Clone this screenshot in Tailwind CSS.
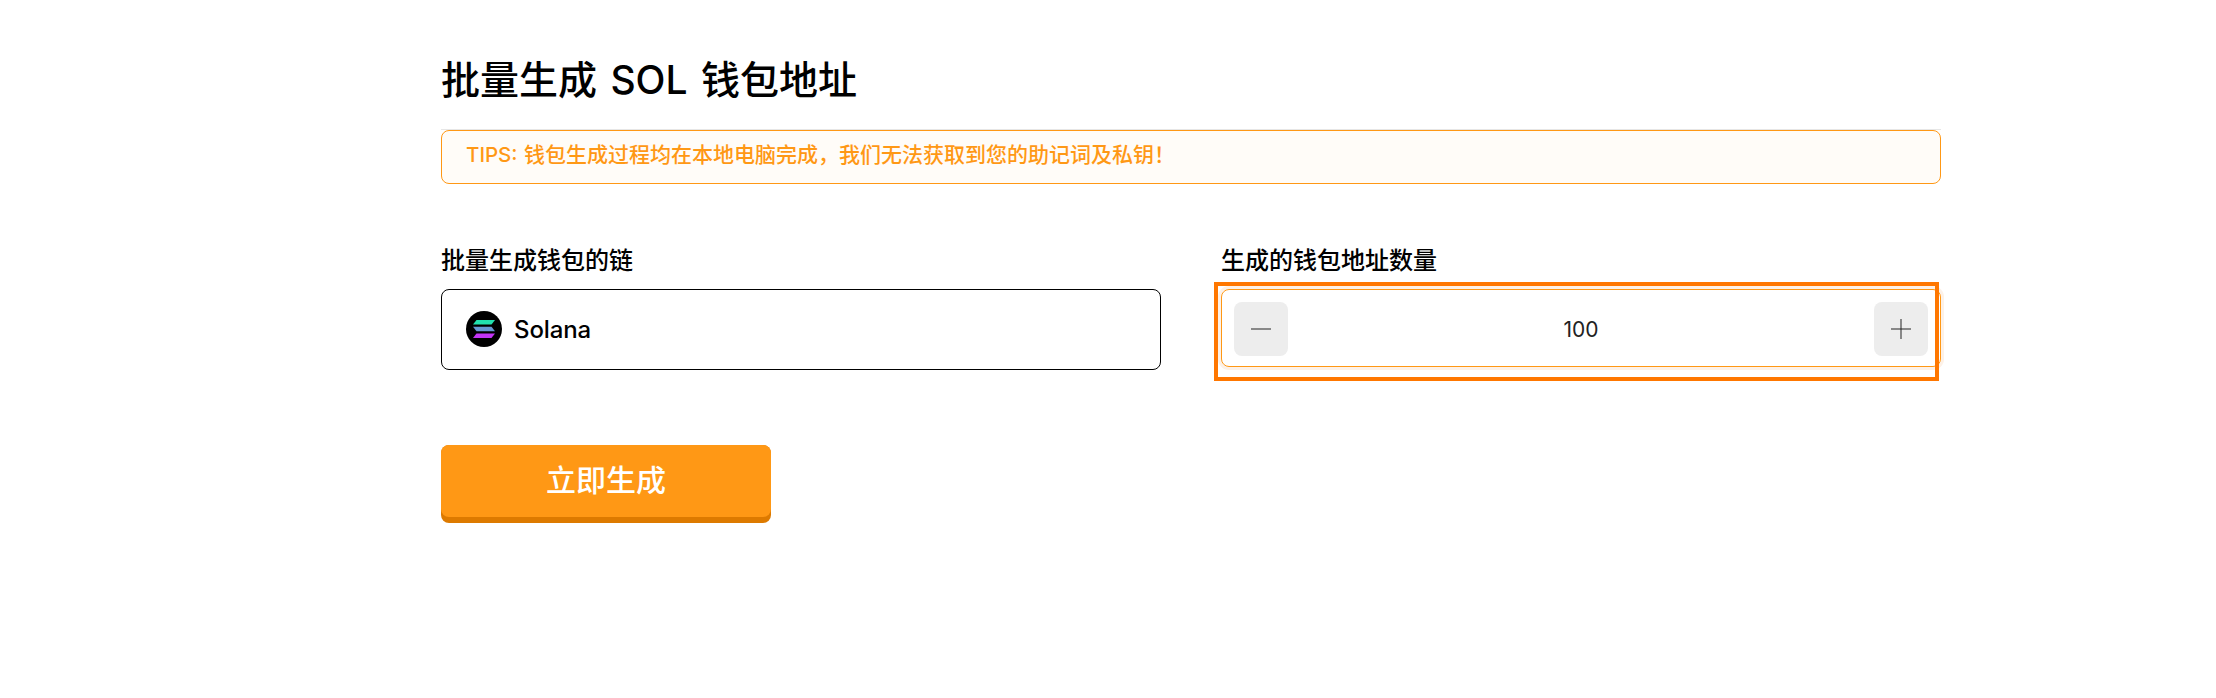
<!DOCTYPE html>
<html lang="zh-CN">
<head>
<meta charset="utf-8">
<title>批量生成 SOL 钱包地址</title>
<script src="https://cdn.jsdelivr.net/npm/@tailwindcss/browser@4"></script>
</head>
<body class="bg-white text-black h-[698px] overflow-hidden font-['Inter','Noto_Sans_CJK_SC',sans-serif]">
<main class="ml-[441px] w-[1500px] pt-[50px]">
  <h1 class="h-[79px] leading-[59px] text-[39px] font-medium whitespace-nowrap [word-spacing:3px]">批量生成 SOL 钱包地址</h1>
  <div class="border-t border-[#e6e6e6]">
    <p class="h-[54px] rounded-lg border border-[#ff9815] bg-[#fffcf8] pl-6 text-[21px] font-medium leading-[48px] text-[#ff9815] whitespace-nowrap"><span class="text-[20.500px] [word-spacing:1px]">TIPS: </span>钱包生成过程均在本地电脑完成，我们无法获取到您的助记词及私钥！</p>
  </div>
  <div class="mt-[59px] grid grid-cols-2 gap-[60px]">
    <section>
      <h2 class="h-[46px] leading-[36px] text-[24px] font-medium">批量生成钱包的链</h2>
      <div class="h-[81px] flex items-center gap-3 rounded-lg border border-black pb-px pl-6 text-[24px] font-medium">
        <svg class="size-9" viewBox="0 0 36 36">
          <circle cx="18" cy="18" r="18" fill="#000"/>
          <path d="M10.500 9H29L25.500 13.500H7Z" fill="#22e0ae"/>
          <path d="M7 15.800H25.500L29 20.200H10.500Z" fill="#6797d3"/>
          <path d="M10.500 22.500H29L25.500 27H7Z" fill="#c335f5"/>
        </svg>
        <span class="pt-px tracking-[-0.1px]">Solana</span>
      </div>
    </section>
    <section class="relative">
      <h2 class="h-[46px] leading-[36px] text-[24px] font-medium">生成的钱包地址数量</h2>
      <div class="h-[78px] flex items-center justify-between rounded-lg border border-[#ff9815] px-3 pt-0.5 shadow-[0_0_0_3px_#fdf1e7]">
        <button class="size-[54px] rounded-lg bg-[#ededed] flex items-center justify-center"><svg class="size-5" viewBox="0 0 20 20"><path d="M0 10H20" stroke="#888" stroke-width="2"/></svg></button>
        <span class="text-[21px] text-[#222] pt-px">100</span>
        <button class="size-[54px] rounded-lg bg-[#ededed] flex items-center justify-center"><svg class="size-5" viewBox="0 0 20 20"><path d="M0 10H20M10 0V20" stroke="#888" stroke-width="2"/><path d="M9 9H11V11H9Z" fill="#555"/></svg></button>
      </div>
      <div class="absolute left-[-7px] top-[39px] h-[99px] w-[725px] border-4 border-[#ff7700]"></div>
    </section>
  </div>
  <button class="mt-[75px] block h-[78px] w-[330px] rounded-lg bg-[#dd7a00] pb-1.5"><span class="flex h-full items-center justify-center rounded-lg bg-[#ff9815] pb-0.5 text-[30px] text-white font-medium">立即生成</span></button>
</main>
</body>
</html>
